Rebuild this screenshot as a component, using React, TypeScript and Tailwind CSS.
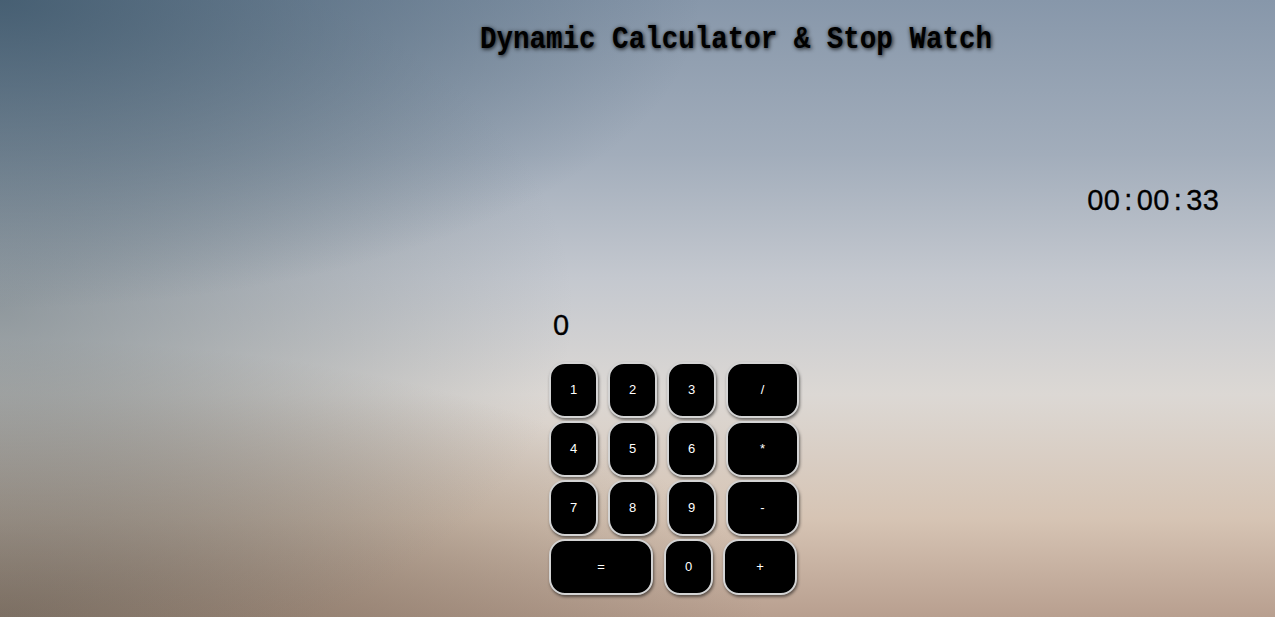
import React, { useState } from 'react'

const rows = [
  [
    { k: '1', w: 'w-[49px]' },
    { k: '2', w: 'w-[49px]' },
    { k: '3', w: 'w-[49px]' },
    { k: '/', w: 'w-[73px]' },
  ],
  [
    { k: '4', w: 'w-[49px]' },
    { k: '5', w: 'w-[49px]' },
    { k: '6', w: 'w-[49px]' },
    { k: '*', w: 'w-[73px]' },
  ],
  [
    { k: '7', w: 'w-[49px]' },
    { k: '8', w: 'w-[49px]' },
    { k: '9', w: 'w-[49px]' },
    { k: '-', w: 'w-[73px]' },
  ],
  [
    { k: '=', w: 'w-[104px]' },
    { k: '0', w: 'w-[49px] ml-px' },
    { k: '+', w: 'w-[74px]' },
  ],
]

// fixed cell per character, like a half-width gothic font
const Mono: React.FC<{ text: string }> = ({ text }) => (
  <span className="inline-flex">
    {text.split('').map((c, i) => (
      <span key={i} className="inline-block w-[16.5px] text-center">
        {c}
      </span>
    ))}
  </span>
)

const App: React.FC = () => {
  const [display, setDisplay] = useState('0')

  const press = (k: string) => {
    if (k === '=') {
      try {
        const result = Function(`return (${display})`)()
        setDisplay(String(result))
      } catch {
        setDisplay('0')
      }
      return
    }
    setDisplay((d) => (d === '0' ? k : d + k))
  }

  return (
    <div className="h-[617px] w-full overflow-hidden pt-[24px] bg-[image:radial-gradient(ellipse_55%_50%_at_0%_0%,rgba(60,86,106,0.85),transparent),radial-gradient(ellipse_45%_60%_at_0%_50%,rgba(105,118,124,0.6),transparent),radial-gradient(ellipse_60%_45%_at_0%_100%,rgba(112,98,84,0.8),transparent),linear-gradient(to_bottom,#8797aa_0%,#a2adbb_25%,#c4c8cf_45%,#dcd8d4_64%,#d6c4b4_84%,#b89f8f_100%)]">
      <div className="pl-[480px]">
        <h1 className="inline-block origin-left scale-x-[0.86] whitespace-nowrap font-['Liberation_Mono',monospace] text-[32px] font-bold leading-[32px] text-black [text-shadow:1px_1px_5px_rgba(0,0,0,0.9)]">
          Dynamic Calculator &amp; Stop Watch
        </h1>
      </div>

      <div className="mt-[130px] pl-[1087px]">
        <div className="font-['Liberation_Sans',Arial,sans-serif] text-[29px] leading-[28px] text-black [-webkit-text-stroke:0.3px_#000]">
          <Mono text="00:00:33" />
        </div>
      </div>

      <div className="mt-[97px] pl-[549px]">
        <div className="pl-[4px] font-['Liberation_Sans',Arial,sans-serif] text-[29px] leading-[28px] text-black [-webkit-text-stroke:0.3px_#000]">{display}</div>

        <div className="mt-[23px] flex flex-col gap-[3px]">
          {rows.map((row, i) => (
            <div key={i} className="flex gap-[10px]">
              {row.map((b) => (
                <button
                  key={b.k}
                  onClick={() => press(b.k)}
                  className={`${b.w} h-[56px] rounded-[16px] border-2 border-[#d4d4d4] bg-black font-['Liberation_Sans',Arial,sans-serif] text-[13px] text-white shadow-[1px_2px_3px_rgba(0,0,0,0.5)]`}
                >
                  {b.k}
                </button>
              ))}
            </div>
          ))}
        </div>
      </div>
    </div>
  )
}

export default App
